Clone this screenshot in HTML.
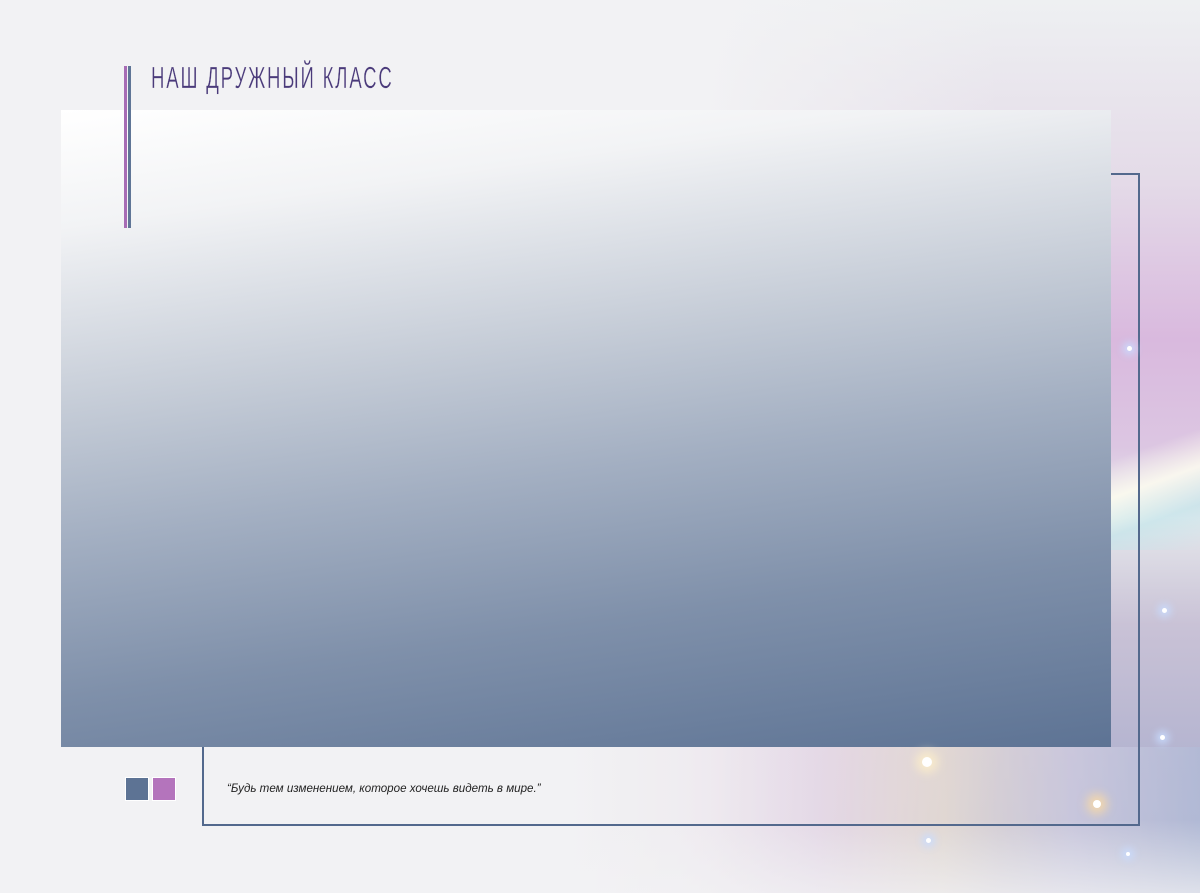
<!DOCTYPE html>
<html><head><meta charset="utf-8"><style>
html,body{margin:0;padding:0}
body{width:1200px;height:893px;position:relative;overflow:hidden;background:#f2f2f4;font-family:"Liberation Sans","Noto Sans CJK SC",sans-serif}
.bgr{position:absolute;left:700px;top:0;width:500px;height:893px;
background:linear-gradient(90deg,rgba(242,242,244,1) 0%,rgba(242,242,244,0) 60%),
linear-gradient(180deg,#eef0f2 0%,#e4dbe8 20%,#d9b9de 38%,#dcc6e2 50%,#e6e8ec 58%,#c9c2d6 70%,#b4b4d0 85%,#a9b0cc 100%);}
.bgr2{position:absolute;left:1110px;top:430px;width:90px;height:120px;background:linear-gradient(160deg,rgba(255,255,255,0) 20%,rgba(255,255,240,.8) 45%,rgba(190,230,235,.6) 70%,rgba(255,255,255,0) 100%)}
.bgb{position:absolute;left:560px;top:747px;width:640px;height:146px;opacity:.7;background:linear-gradient(90deg,rgba(242,242,244,1) 0%,rgba(242,242,244,0) 45%),linear-gradient(90deg,#ece8ee,#e9d6e6 40%,#f0e2d2 60%,#d3cfe2 80%,#b2bcd8)}
.fade{position:absolute;left:560px;top:820px;width:640px;height:73px;background:linear-gradient(180deg,rgba(242,242,244,0),rgba(242,242,244,.7))}
.panel{position:absolute;left:61px;top:110px;width:1050px;height:637px;background:linear-gradient(172deg,#ffffff 0%,#f2f3f5 15%,#c5ccd7 38%,#a3afc2 55%,#7f90aa 75%,#5d7394 100%)}
.frame{position:absolute;left:202px;top:173px;width:934px;height:649px;border:2px solid #53698d}
.l1{position:absolute;left:124px;top:66px;width:3px;height:162px;background:#a76cb5}
.l2{position:absolute;left:128px;top:66px;width:3px;height:162px;background:#5f7596}
.title{position:absolute;left:151px;top:60px;font-size:31px;color:#4a3a7a;transform:scaleX(.6);transform-origin:left top;letter-spacing:3px;white-space:nowrap;-webkit-text-stroke:0.3px #f2f2f4}
.s1{position:absolute;left:125px;top:777px;width:22px;height:22px;background:#5d7394;border:1px solid #fff}
.s2{position:absolute;left:152px;top:777px;width:22px;height:22px;background:#b474bc;border:1px solid #fff}
.q{position:absolute;left:227px;top:782px;font-size:11.6px;font-style:italic;color:#222}
.st{position:absolute;border-radius:50%;background:#fff;box-shadow:0 0 8px 4px rgba(200,220,255,.9)}
</style></head><body>
<div class="bgr"></div><div class="bgr2"></div><div class="bgb"></div><div class="fade"></div>
<div class="frame"></div>
<div class="panel"></div>
<div class="l1"></div><div class="l2"></div>
<div class="title">НАШ ДРУЖНЫЙ КЛАСС</div>
<div class="s1"></div><div class="s2"></div>
<div class="q">“Будь тем изменением, которое хочешь видеть в мире.”</div>
<div class="st" style="left:1162px;top:608px;width:5px;height:5px"></div>
<div class="st" style="left:1160px;top:735px;width:5px;height:5px"></div>
<div class="st" style="left:922px;top:757px;width:10px;height:10px;box-shadow:0 0 10px 6px rgba(255,240,200,.8)"></div>
<div class="st" style="left:1093px;top:800px;width:8px;height:8px;box-shadow:0 0 10px 6px rgba(255,220,160,.8)"></div>
<div class="st" style="left:926px;top:838px;width:5px;height:5px"></div>
<div class="st" style="left:1126px;top:852px;width:4px;height:4px"></div>
<div class="st" style="left:1127px;top:346px;width:5px;height:5px"></div>
</body></html>
